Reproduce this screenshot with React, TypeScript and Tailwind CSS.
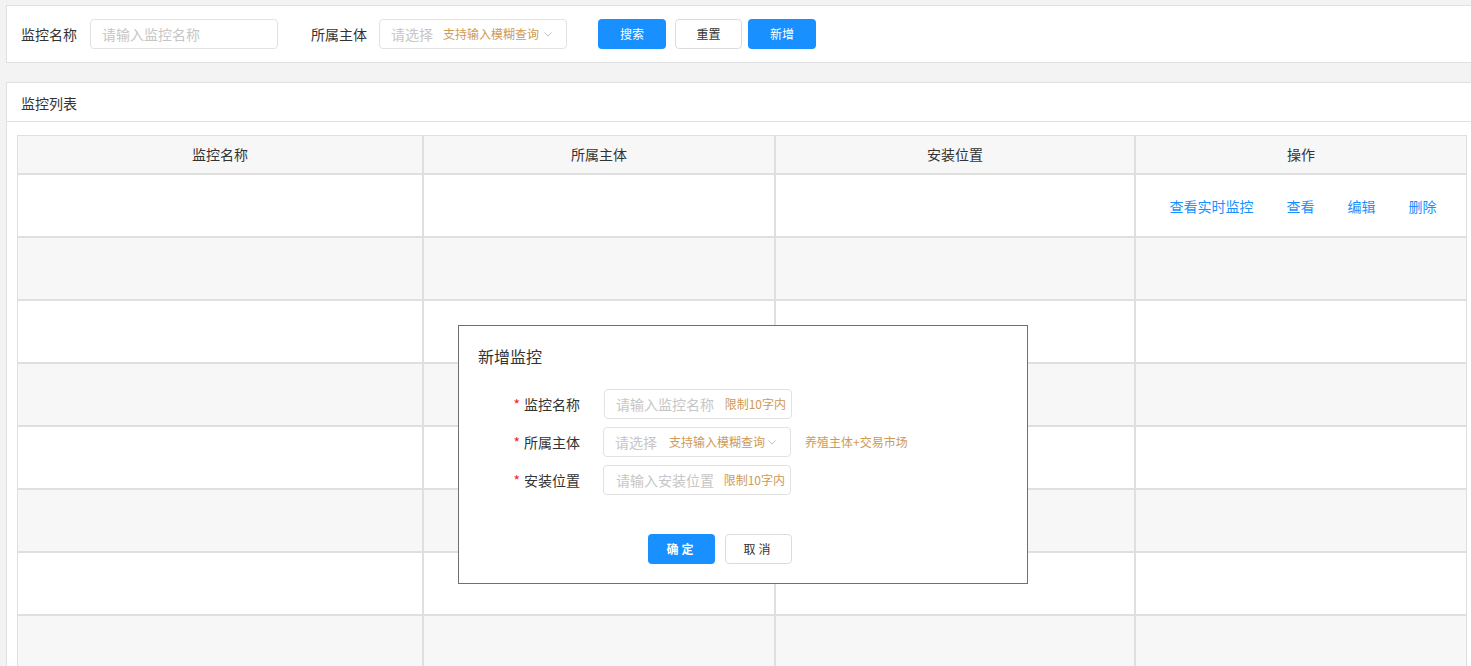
import React from 'react';

const font = { fontFamily: '"Noto Sans CJK SC", "Noto Sans", sans-serif' };

const Chevron = () => (
  <svg width="10" height="10" viewBox="0 0 10 10" className="shrink-0">
    <path d="M1.5 3.5 L5 7 L8.5 3.5" fill="none" stroke="#c0c4cc" strokeWidth="1" />
  </svg>
);

const SelectBox = ({ gap = 'ml-[10px]' }: { gap?: string }) => (
  <div className="flex h-[30px] w-[188px] items-center rounded border border-[#e2e2e2] bg-white pl-[11px] pr-[13px]">
    <span className="text-[14px] text-[#c6c6c6]">请选择</span>
    <span className={`${gap} text-[12px] text-[#cf9a55]`}>支持输入模糊查询</span>
    <span className="ml-auto">
      <Chevron />
    </span>
  </div>
);

const columns = [
  { title: '监控名称', w: 'w-[406px]' },
  { title: '所属主体', w: 'w-[352px]' },
  { title: '安装位置', w: 'w-[360px]' },
  { title: '操作', w: 'w-[332px]' },
];

export default function App() {
  const rows = Array.from({ length: 8 });

  return (
    <div style={font} className="relative h-screen w-full overflow-hidden bg-[#f3f3f3] pl-[6px] pt-[5px] text-[#333]">
      {/* filter bar */}
      <div className="flex h-[58px] items-center border border-r-0 border-[#e0e0e0] bg-white pl-[14px]">
        <span className="text-[14px]">监控名称</span>
        <div className="ml-[13px] flex h-[30px] w-[188px] items-center rounded border border-[#e2e2e2] px-[11px] text-[14px] text-[#c6c6c6]">
          请输入监控名称
        </div>
        <span className="ml-[33px] text-[14px]">所属主体</span>
        <div className="ml-[12px]">
          <SelectBox />
        </div>
        <button className="ml-[31px] h-[30px] w-[68px] rounded bg-[#1890ff] text-[12px] text-white">搜索</button>
        <button className="ml-[9px] h-[30px] w-[67px] rounded border border-[#dcdcdc] bg-white text-[12px] text-[#333]">重置</button>
        <button className="ml-[6px] h-[30px] w-[68px] rounded bg-[#1890ff] text-[12px] text-white">新增</button>
      </div>

      {/* list panel */}
      <div className="mt-[19px] border border-r-0 border-[#e0e0e0] bg-white">
        <div className="flex h-[39px] items-center border-b border-[#e0e0e0] pl-[14px] pt-[2px] text-[14px]">监控列表</div>
        <div className="pl-[10px] pt-[13px]">
          <table className="border-separate border-spacing-0 text-[14px]">
            <thead>
              <tr>
                {columns.map((c) => (
                  <th key={c.title} className={`${c.w} h-[39px] border border-[#dfdfdf] bg-[#f7f7f7] text-center font-normal text-[#333]`}>
                    {c.title}
                  </th>
                ))}
              </tr>
            </thead>
            <tbody>
              {rows.map((_, i) => (
                <tr key={i} className={i % 2 === 1 ? 'bg-[#f7f7f7]' : 'bg-white'}>
                  {columns.map((c, j) => (
                    <td key={c.title} className="h-[63px] border border-[#dfdfdf] text-center">
                      {i === 0 && j === 3 ? (
                        <div className="flex justify-center gap-[33px] pl-[4px] pt-[2px] text-[#1890ff]">
                          <span>查看实时监控</span>
                          <span>查看</span>
                          <span>编辑</span>
                          <span>删除</span>
                        </div>
                      ) : null}
                    </td>
                  ))}
                </tr>
              ))}
            </tbody>
          </table>
        </div>
      </div>

      {/* dialog */}
      <div className="absolute left-[458px] top-[325px] h-[259px] w-[570px] border border-[#6f6f6f] bg-white">
        <div className="pl-[19px] pt-[18px] text-[16px] text-[#333]">新增监控</div>
        <div className="mt-[21px] flex flex-col gap-[8px] pl-[53px]">
          <div className="flex items-center">
            <span className="w-[68px] text-right text-[14px]">
              <span className="mr-[4px] text-[#f5222d]">*</span>监控名称
            </span>
            <div className="ml-[24px] flex h-[30px] w-[188px] items-center rounded border border-[#e2e2e2] pl-[11px] pr-[5px]">
              <span className="text-[14px] text-[#c6c6c6]">请输入监控名称</span>
              <span className="ml-auto text-[12px] text-[#cf9a55]">限制10字内</span>
            </div>
          </div>
          <div className="flex items-center">
            <span className="w-[68px] text-right text-[14px]">
              <span className="mr-[4px] text-[#f5222d]">*</span>所属主体
            </span>
            <div className="ml-[23px]">
              <SelectBox gap="ml-[12px]" />
            </div>
            <span className="ml-[14px] text-[12px] text-[#cf9a55]">养殖主体+交易市场</span>
          </div>
          <div className="flex items-center">
            <span className="w-[68px] text-right text-[14px]">
              <span className="mr-[4px] text-[#f5222d]">*</span>安装位置
            </span>
            <div className="ml-[23px] flex h-[30px] w-[188px] items-center rounded border border-[#e2e2e2] pl-[12px] pr-[5px]">
              <span className="text-[14px] text-[#c6c6c6]">请输入安装位置</span>
              <span className="ml-auto text-[12px] text-[#cf9a55]">限制10字内</span>
            </div>
          </div>
        </div>
        <div className="mt-[39px] flex gap-[10px] pl-[189px]">
          <button className="h-[30px] w-[67px] rounded bg-[#1890ff] text-[12px] font-semibold tracking-[3px] text-white">确定</button>
          <button className="h-[30px] w-[67px] rounded border border-[#dcdcdc] bg-white text-[12px] tracking-[3px] text-[#333]">取消</button>
        </div>
      </div>
    </div>
  );
}
